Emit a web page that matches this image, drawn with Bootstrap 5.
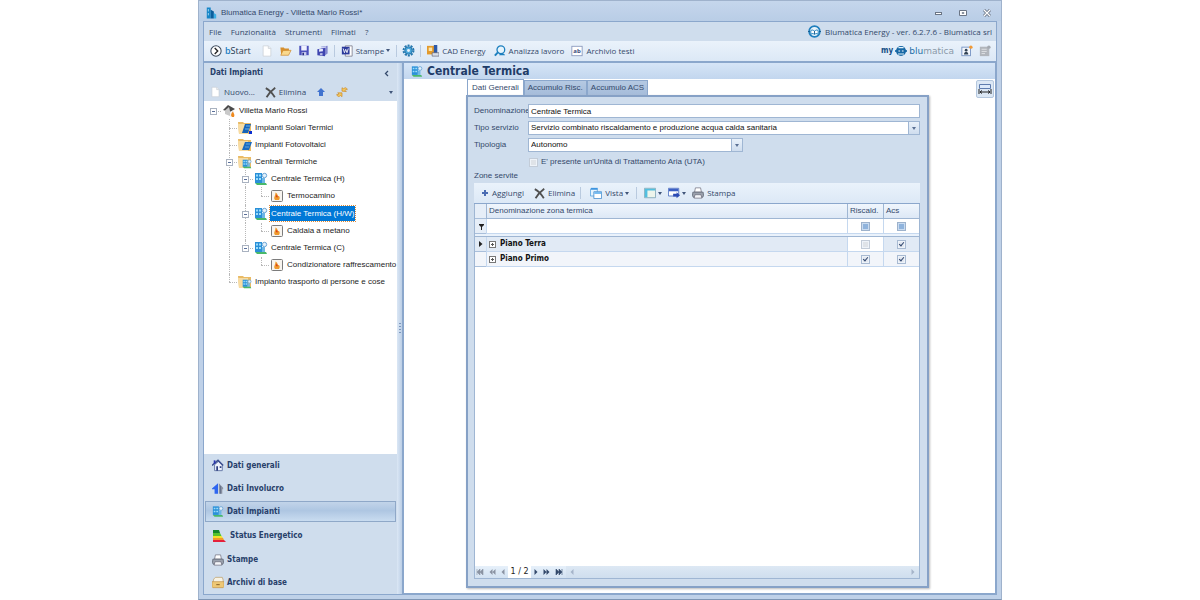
<!DOCTYPE html>
<html lang="it">
<head>
<meta charset="utf-8">
<meta name="viewport" content="width=device-width, initial-scale=1">
<title>Blumatica Energy - Villetta Mario Rossi*</title>
<link href="https://cdn.jsdelivr.net/npm/bootstrap@5.3.0/dist/css/bootstrap.min.css" rel="stylesheet">
<style>
:root{--ink:#34496b;--line:#8ba7cc;--face:#cfdded;--soft:#a9bfdb}
body{font:8px/14px "Open Sans","Noto Sans",sans-serif;color:var(--ink);background:#fff}
svg{display:block;flex:none}
button{border:0;background:none;color:inherit;padding:0;font:inherit}
.win{max-width:804px;border:1px solid #9fb2cc;border-bottom-color:#7f96b4;background:#bfd1e8;padding:0 4px 4px}
.titlebar{height:20px;background:linear-gradient(#c5d6ec,#b9cde6);margin:0 -4px;padding:3px 10px 0 7px}
.tah{font-family:"Liberation Sans",Arial,sans-serif}
.sego{font-family:"Open Sans","Noto Sans",sans-serif}
.bold{font-family:"DejaVu Sans Condensed","DejaVu Sans",sans-serif;font-weight:700}
.inner{border:1px solid var(--line);background:var(--face)}
.menubar{height:19px;padding:0 4px 0 5px}
.menubar a{color:var(--ink);text-decoration:none;margin-right:9px}
.toolstrip{height:21px;background:linear-gradient(#eaf2fb,#dce8f6);border-bottom:1px solid var(--line)}
.toolstrip.main{height:22px;padding:0 2px 1px 3px;border-bottom-width:2px}
.tool{display:flex;align-items:center;gap:3px;padding:0 3px;white-space:nowrap}
.tool.wide{padding:0 4px}
.rule{width:1px;height:12px;background:#b9cadf;margin:0 2px}
.caret{width:0;height:0;border:2px solid transparent;border-top:3px solid #41567a;border-bottom:0;margin-left:-1px}
.bstart{font-size:9px}
.bstart b{color:#1d7ec2;font-weight:600}.bstart span span{font-weight:500;color:#22364f}
.logo{font:9px "DejaVu Sans",sans-serif;color:#8b99a8;gap:2px}.logo b{font-weight:400;color:#1e70a8}.logo strong{font-size:8px;color:#164f86}
.side{width:193px;flex:none}
.side h2{font-size:8px;line-height:20px;margin:0;color:#27406a}
.sidetools{height:18px;padding-left:3px}
.heading{padding-left:6px}
.treebox{background:#fff;padding:1px 0 0 1px;overflow:hidden}
.tree{height:189px;margin:0;padding:0;list-style:none;color:#1c1c1c}
.tree li{display:flex;align-items:stretch;white-space:nowrap}
.tree li>svg{align-self:center;margin:0 1px}
.tree .txt{align-self:center;padding:0 1px;margin-left:1px}
.tree .txt.on{background:#0078d7;color:#fff;outline:1px dotted #e08a35;outline-offset:0;line-height:15px}
.cell{width:16px;flex:none;position:relative}
.cell.v::before,.cell.t::before,.cell.e::before{content:"";position:absolute;left:8px;top:0;bottom:0;border-left:1px dotted #b8b8b8}
.cell.e::before{bottom:50%}
.cell.t::after,.cell.e::after,.cell.h::after{content:"";position:absolute;left:8px;right:0;top:50%;border-top:1px dotted #b8b8b8}
.twist{position:absolute;z-index:1;left:5px;top:50%;margin-top:-3px;width:7px;height:7px;background:#fff;border:1px solid #a9b2c0}
.twist::after{content:"";position:absolute;left:1px;right:1px;top:2px;height:1px;background:#5a6f9a}
.sidenav button{display:flex;align-items:center;gap:3px;height:23px;padding:0 6px;margin:0 1px;border:1px solid transparent;color:#27406a}
.sidenav button.on{height:21px;margin:1px;border-color:#8fa8c8;background:linear-gradient(#c2d4e9,#aec6e2 45%,#c9dcf0)}
.sidenav button.tall{height:25px}
.split{width:5px;flex:none;background:linear-gradient(90deg,#dbe7f5,#bccfe6)}
.grip{width:2px;height:11px;background:repeating-linear-gradient(#7d97bd 0 1px,transparent 1px 3px)}
.main-pane{border:1px solid var(--line);border-width:0 1px 1px 2px;background:#fff;min-width:0}
.pagehead{height:16px;background:linear-gradient(#d6e5f7,#c2d6ee);padding-left:7px;color:#1f3c68}
.pagehead h1{font-size:12px;line-height:15px;margin:0}
.pages{padding:0 66px 5px 62px}
.tabs{height:16px;padding-left:1px}
.tabs button{height:15px;margin-top:1px;padding:0 3px;border:1px solid var(--line);border-bottom:0;background:linear-gradient(#b5c9e2,#a5bcda)}
.tabs button.on{background:#fff;height:16px;margin-top:0;padding:0 4px}
.sheet{border:2px solid #86a1c6;background:var(--face);padding:7px 7px 7px 6px;box-shadow:1px 1px 2px #bbb}
.formgrid{display:grid;grid-template-columns:54px 1fr;row-gap:3px;line-height:14px}
.field{height:14px;width:100%;border:1px solid #9fb6d3;border-radius:0;background:#fff;color:#111;padding:0 2px;font:8px/12px "Liberation Sans",Arial,sans-serif;appearance:none;display:block}
.pick{position:relative}
.pick::after{content:"";position:absolute;right:1px;top:1px;bottom:1px;width:11px;border-left:1px solid #9fb6d3;background:linear-gradient(#e9f1fa,#cfddee);pointer-events:none}
.pick::before{content:"";position:absolute;z-index:1;right:4px;top:6px;border:2px solid transparent;border-top:3px solid #5a7094;border-bottom:0;pointer-events:none}
.pick.half{width:215px}
.uta{display:flex;align-items:center;gap:3px;padding-left:1px}
.tick{appearance:none;width:9px;height:9px;margin:0;border:1px solid #a8bad2;background:#e3e8f0;position:relative;display:inline-block;vertical-align:top;flex:none;box-shadow:inset 0 0 0 1px #eef3f9}
.tick.dim{border-color:#c3ccd8;background:#dfe3e8}
.tick.mid{background:#8fb3dc;border-color:#9db2cc;box-shadow:inset 0 0 0 1px #c9dbf0}
.tick:checked::after{content:"";position:absolute;left:2px;top:0;width:3px;height:5px;border:solid #31486f;border-width:0 1px 1px 0;transform:rotate(40deg)}
.zones{border:1px solid #9fb6d3;border-top:0;background:#fff}
.zgrid{width:100%;table-layout:fixed;border-collapse:separate;border-spacing:0;line-height:12px}
.zgrid td,.zgrid th{height:15px;padding:0 2px;border:0 solid #c5d8ef;border-width:0 0 1px 1px;font-weight:400;white-space:nowrap;vertical-align:middle}
.zgrid th{background:linear-gradient(#f0f6fd,#dde8f6);border-color:#9fb6d3}
.zgrid tr>:first-child{border-left:0;padding:0 0 0 4px;background:#e6eef8;border-bottom-color:#a9bfdb}
.zgrid .gap td{height:3px;padding:0;background:#eaf2fb;border-width:0 0 1px;border-color:#9fb6d3}
.zgrid .c{text-align:center;line-height:9px;padding:1px 0 0}
.zgrid .sel td{background:#e1eaf5}.zgrid .alt td{background:#f2f5fa}
.zgrid .nm{color:#111;font-weight:700}
.plus{width:7px;height:7px;border:1px solid #777;background:linear-gradient(#555,#555) center/3px 1px no-repeat,linear-gradient(#555,#555) center/1px 3px no-repeat,#fff;margin-right:4px}
.pager{height:12px;background:linear-gradient(#dde8f4,#cfdeee)}
.pager .keys{background:linear-gradient(#e6f0fa,#d3e2f2);gap:5px;padding:0 3px 0 1px}
.pager .keys.fwd{padding:0 3px}
.pager .num{width:23px;background:#fff;color:#222;text-align:center;line-height:12px;font-family:"DejaVu Sans",sans-serif}
.fitbtn{right:1px;top:1px;padding:3px 1px;border:1px solid #b4c7de;border-radius:2px;background:#dce8f5}
</style>
</head>
<body>
<svg width="0" height="0" class="position-absolute" aria-hidden="true">
<symbol id="i-house" viewBox="0 0 14 14"><path d="M1 6 6 1l7 4-5 3z" fill="#4a4a4a"/><path d="M3 6.500l4-3.500 1 4v5L3 10z" fill="#c9c9c9"/><path d="m8 8 4-2v5l-4 2z" fill="#eee"/><path d="M10 13c-2-2 0-4 .8-5.500C12 9.500 13 11 12 13z" fill="#f08a1d"/></symbol>
<symbol id="i-folder" viewBox="0 0 14 14"><path d="M0 1h5l1 1h7v11H1z" fill="#e9bb66"/><path d="M0 3h10v10H1z" fill="#f8dca2"/></symbol>
<symbol id="i-solar" viewBox="0 0 14 14"><use href="#i-folder"/><path d="M7 3h6l-3 9H4z" fill="#1764b8"/><path d="M8 5h4M7 8h4" stroke="#6fb4ea"/><path d="M11 10h3v3h-3z" fill="#0b2fd0"/></symbol>
<symbol id="i-pv" viewBox="0 0 14 14"><use href="#i-folder"/><path d="M7 4h7l-3 8H4z" fill="#1c6cc0"/><path d="M8 6h4M7 9h4" stroke="#7ec0ee" stroke-width=".7"/></symbol>
<symbol id="i-plant" viewBox="0 0 14 14"><path d="M1 1h7v10H1z" fill="#2a90d8"/><path d="M2 2.500h2v2H2zM5 2.500h2v2H5zM2 6h2v2H2zM5 6h2v2H5z" fill="#9bdcfb"/><circle cx="10.500" cy="3.500" r="2.200" fill="#e4f1fb" stroke="#6aa5d6"/><path d="M8 6h3v5H8z" fill="#6db6e6"/><path d="M1 11h11l1 2H3z" fill="#49b86a"/></symbol>
<symbol id="i-fplant" viewBox="0 0 14 14"><use href="#i-folder"/><use href="#i-plant" x="4" y="4" width="10" height="10"/></symbol>
<symbol id="i-flame" viewBox="0 0 14 14"><rect x="1.500" y="1.500" width="11" height="11" rx="1" fill="#f7f4ef" stroke="#7c7c7c"/><path d="M5 11C3 8.500 5.500 7 5.500 3.500c2 1 2 2.500 2.500 3.500 1.500-.3 2.500 2 1 4z" fill="#ef9a2d"/><path d="M5.800 8c0-1 .7-1.500.7-2.500C7.500 6.500 8 7.500 7.500 8.500z" fill="#d9401d"/></symbol>
<symbol id="i-page" viewBox="0 0 14 14"><path d="M2.500 1h6l3 3v9h-9z" fill="#fff" stroke="#c6cbd3" stroke-width=".8"/><path d="M8.500 1v3h3" fill="#eee" stroke="#c6cbd3" stroke-width=".8"/></symbol>
<symbol id="i-x" viewBox="0 0 14 14"><path d="M1 1.500c4 2 8 6 11.500 11.500M13 1C9 4 5 8 2 13" fill="none" stroke="#505050" stroke-width="2.300"/></symbol>
<symbol id="i-open" viewBox="0 0 14 14"><path d="M1 3h4l1 1h5v7H2z" fill="#d6902f"/><path d="m4 6.500 9.500-.3L10.500 12H1.500z" fill="#f9d98e" stroke="#cf8a2e" stroke-width=".8"/></symbol>
<symbol id="i-save" viewBox="0 0 14 14"><path d="M1 1h12v12H1z" fill="#4b50bb"/><path d="M3.500 1h7v6h-7z" fill="#eef1ff"/><path d="M4 9h6v4H4z" fill="#c9cdec"/><path d="M5 10h2v3H5z" fill="#222a80"/></symbol>
<symbol id="i-saveall" viewBox="0 0 14 14"><path d="m5 2 8-1v9l-3 2z" fill="#8388cf"/><path d="m1 5 9-1.500V13l-9-1z" fill="#3f45b0"/><path d="m3 5 4.500-.7v3L3 8z" fill="#e8ebff"/><path d="m5 2.500 6-.7v1L5 3.500z" fill="#e8ebff"/><path d="m4 9.500 3-.3v3l-3-.4z" fill="#b8bde6"/></symbol>
<symbol id="i-printer" viewBox="0 0 14 14"><path d="M4 1h6l1 5H3z" fill="#fff" stroke="#667" stroke-width=".8"/><path d="M1 6h12l.5 4-1 2h-11L.5 10z" fill="#9ba2ae" stroke="#4e5563" stroke-width=".8"/><path d="M3.500 9h7l1 4h-9z" fill="#f3f5f9" stroke="#667" stroke-width=".8"/></symbol>
<symbol id="i-gear" viewBox="0 0 14 14"><circle cx="7" cy="7" r="5.300" fill="none" stroke="#2577ad" stroke-width="2.200" stroke-dasharray="2.200 1.130"/><circle cx="7" cy="7" r="4" fill="#4aa6d9" stroke="#2577ad"/><circle cx="7" cy="7" r="1.600" fill="#e8f3fb"/></symbol>
<symbol id="i-blu" viewBox="0 0 14 14"><circle cx="7" cy="7" r="5.800" fill="#e9f4fb" stroke="#1f7fbd" stroke-width="1.800"/><path d="M3 6c2-1.500 3 0 4 .6C8 6 9 4.500 11 6v4C9 8.500 8 9.500 7 10 6 9.500 5 8.500 3 10z" fill="#fff" stroke="#1f7fbd"/><path d="M7 6.500V10M0 7h2m10 0h2" stroke="#145a8c"/></symbol>
</svg>

<main class="win mx-auto min-vh-100 d-flex flex-column">
  <header class="titlebar d-flex align-items-center tah">
    <svg width="11" height="12" viewBox="0 0 14 14" class="me-1"><path d="M1 0h5v14H1z" fill="#1686c8"/><path d="m6 3 4 2v9H6z" fill="#0c5f9d"/><path d="m10 7 3 2v5h-3z" fill="#3db0e6"/><path d="M3 2v3m0 2v3" stroke="#bfe6fa"/></svg>
    <span class="me-auto">Blumatica Energy - Villetta Mario Rossi*</span>
    <button aria-label="Riduci"><svg width="9" height="8"><rect x="1.500" y="3.500" width="6" height="2" fill="#fff" stroke="#6b7585"/></svg></button>
    <button aria-label="Ingrandisci" class="ms-3 me-3"><svg width="8" height="8"><path d="M.5 1.500h7v5h-7z" fill="#fff" stroke="#6b7585"/><path d="M3 3.500h2v1H3z" fill="#6b7585" stroke="#6b7585" stroke-width=".5"/></svg></button>
    <button aria-label="Chiudi"><svg width="8" height="8"><path d="m1 1 6 6m0-6L1 7" stroke="#6b7585" stroke-width="3"/><path d="m1 1 6 6m0-6L1 7" stroke="#fff" stroke-width="1.200"/></svg></button>
  </header>

  <div class="inner flex-grow-1 d-flex flex-column">
    <nav class="menubar d-flex align-items-center">
      <a href="#">File</a><a href="#">Funzionalità</a><a href="#">Strumenti</a><a href="#">Filmati</a><a href="#">?</a>
      <svg width="13" height="13" class="ms-auto me-1"><use href="#i-blu"/></svg><span>Blumatica Energy - ver. 6.2.7.6 - Blumatica srl</span>
    </nav>

    <div class="toolstrip main d-flex align-items-center" role="toolbar">
      <button class="tool bstart me-1"><svg width="12" height="12" viewBox="0 0 14 14"><circle cx="7" cy="7" r="6" fill="#fff" stroke="#3c4a5c" stroke-width="1.200"/><path d="m5.500 3.500 3.500 3.500-3.500 3.500" fill="none" stroke="#222" stroke-width="1.600"/></svg><span><b>b</b><span>Start</span></span></button>
      <button class="tool" aria-label="Nuovo"><svg width="12" height="12"><use href="#i-page"/></svg></button>
      <button class="tool" aria-label="Apri"><svg width="13" height="12"><use href="#i-open"/></svg></button>
      <button class="tool" aria-label="Salva"><svg width="12" height="11"><use href="#i-save"/></svg></button>
      <button class="tool" aria-label="Salva tutto"><svg width="13" height="12"><use href="#i-saveall"/></svg></button>
      <span class="rule"></span>
      <button class="tool wide"><svg width="12" height="12" viewBox="0 0 14 14"><path d="M5 1h8v12H5z" fill="#fff" stroke="#667" stroke-width=".8"/><path d="M1 2h9v9H1z" fill="#2b3a9c"/><path d="m2.500 4 1.500 5 1.500-4L7 9l1.500-5" fill="none" stroke="#fff"/></svg>Stampe<span class="caret"></span></button>
      <span class="rule"></span>
      <button class="tool" aria-label="Impostazioni"><svg width="13" height="13"><use href="#i-gear"/></svg></button>
      <span class="rule"></span>
      <button class="tool wide"><svg width="12" height="12" viewBox="0 0 14 14"><path d="M0 1h9v10H0z" fill="#e39a2c"/><path d="M2 3h4v4H2z" fill="#fbe5ab"/><path d="M8 0h4v10H8z" fill="#2d5aa8"/><path d="M6 9h8v4H6z" fill="#d8dee8" stroke="#556" stroke-width=".7"/></svg>CAD Energy</button>
      <button class="tool wide"><svg width="12" height="12" viewBox="0 0 14 14"><circle cx="8" cy="5.500" r="4.500" fill="#e6f4fc" stroke="#1c7fbe" stroke-width="1.500"/><path d="M4.500 8.500 1 12.500" stroke="#1c7fbe" stroke-width="2.200"/><path d="M6 12c1-3 5-3 7 0z" fill="#1c7fbe"/></svg>Analizza lavoro</button>
      <button class="tool"><svg width="12" height="12" viewBox="0 0 14 14"><rect x="1" y="1.500" width="12" height="11" fill="#fff" stroke="#8796bb"/><text x="7" y="9.500" font-size="7" text-anchor="middle" font-weight="700" fill="#3b4a7c">ab</text></svg>Archivio testi</button>
      <span class="ms-auto d-flex align-items-center logo"><strong class="bold">my</strong><svg width="12" height="12" viewBox="0 0 14 14"><circle cx="7" cy="7" r="5.800" fill="#1768a5"/><path d="M0 7h14" stroke="#1768a5" stroke-width="2"/><path d="M4 3h6M3.500 10.500h7" stroke="#e6f4fc" stroke-width="1.400"/><path d="M4 7h2m2 0h2" stroke="#fff" stroke-width="1.400"/></svg><span><b>blu</b>matica</span></span>
      <button class="tool ms-1" aria-label="Account"><svg width="12" height="12" viewBox="0 0 14 14"><rect x="1" y="2.500" width="10" height="10" fill="#f3f7fd" stroke="#6f8fc0"/><circle cx="6" cy="6" r="1.600" fill="#345"/><path d="M3.500 11c0-4 5-4 5 0z" fill="#345"/><circle cx="11.500" cy="2.500" r="2" fill="#f29a35"/></svg></button>
      <button class="tool" aria-label="Note"><svg width="12" height="12" viewBox="0 0 14 14"><path d="M1 2h11v11H1z" fill="#b2b6bc"/><path d="M3 5h6M3 7.500h6M3 10h4" stroke="#e4e6e9"/><circle cx="11.500" cy="2.500" r="2" fill="#a4a9b0"/></svg></button>
    </div>

    <div class="flex-grow-1 d-flex">
      <aside class="side d-flex flex-column">
        <div class="heading d-flex align-items-center"><h2 class="bold me-auto">Dati Impianti</h2><button aria-label="Comprimi" class="me-2"><svg width="5" height="7"><path d="M4 1 1.500 3.500 4 6" fill="none" stroke="#34496b" stroke-width="1.300"/></svg></button></div>
        <div class="sidetools d-flex align-items-center" role="toolbar">
          <button class="tool"><svg width="11" height="12"><use href="#i-page"/></svg>Nuovo...</button>
          <button class="tool ms-1"><svg width="11" height="11"><use href="#i-x"/></svg>Elimina</button>
          <button class="tool wide ms-1" aria-label="Su"><svg width="8" height="8" viewBox="0 0 8 8"><path d="m4 0 4 4H6v4H2V4H0z" fill="#4173cf"/></svg></button>
          <button class="tool ms-1" aria-label="Aggiorna"><svg width="12" height="12" viewBox="0 0 14 14"><path d="M7 6V2l2 1.300C10.500 1 13 2 13 4.500 12 4 11 4 10.500 5L12 6.500zM7 8v4.500L5.200 11C3.500 13.500 1 12 1 9.500c1 .7 2 .7 2.500-.2L2 8z" fill="#f5c95c" stroke="#c9892a" stroke-width=".8"/></svg></button>
          <button class="ms-auto me-1" aria-label="Altro"><span class="caret d-block"></span></button>
        </div>
        <div class="treebox flex-grow-1 tah">
          <ul class="tree d-flex flex-column" role="tree">
            <li class="flex-fill"><span class="cell h"><i class="twist"></i></span><svg width="14" height="14"><use href="#i-house"/></svg><span class="txt">Villetta Mario Rossi</span></li>
            <li class="flex-fill"><span class="cell"></span><span class="cell t"></span><svg width="14" height="14"><use href="#i-solar"/></svg><span class="txt">Impianti Solari Termici</span></li>
            <li class="flex-fill"><span class="cell"></span><span class="cell t"></span><svg width="14" height="14"><use href="#i-pv"/></svg><span class="txt">Impianti Fotovoltaici</span></li>
            <li class="flex-fill"><span class="cell"></span><span class="cell t"><i class="twist"></i></span><svg width="14" height="14"><use href="#i-fplant"/></svg><span class="txt">Centrali Termiche</span></li>
            <li class="flex-fill"><span class="cell"></span><span class="cell v"></span><span class="cell t"><i class="twist"></i></span><svg width="14" height="14"><use href="#i-plant"/></svg><span class="txt">Centrale Termica (H)</span></li>
            <li class="flex-fill"><span class="cell"></span><span class="cell v"></span><span class="cell v"></span><span class="cell e"></span><svg width="14" height="14"><use href="#i-flame"/></svg><span class="txt">Termocamino</span></li>
            <li class="flex-fill"><span class="cell"></span><span class="cell v"></span><span class="cell t"><i class="twist"></i></span><svg width="14" height="14"><use href="#i-plant"/></svg><span class="txt on">Centrale Termica (H/W)</span></li>
            <li class="flex-fill"><span class="cell"></span><span class="cell v"></span><span class="cell v"></span><span class="cell e"></span><svg width="14" height="14"><use href="#i-flame"/></svg><span class="txt">Caldaia a metano</span></li>
            <li class="flex-fill"><span class="cell"></span><span class="cell v"></span><span class="cell e"><i class="twist"></i></span><svg width="14" height="14"><use href="#i-plant"/></svg><span class="txt">Centrale Termica (C)</span></li>
            <li class="flex-fill"><span class="cell"></span><span class="cell v"></span><span class="cell"></span><span class="cell e"></span><svg width="14" height="14"><use href="#i-flame"/></svg><span class="txt">Condizionatore raffrescamento</span></li>
            <li class="flex-fill"><span class="cell"></span><span class="cell e"></span><svg width="14" height="14"><use href="#i-fplant"/></svg><span class="txt">Impianto trasporto di persone e cose</span></li>
          </ul>
        </div>
        <nav class="sidenav d-flex flex-column bold">
          <button><svg width="12" height="13" viewBox="0 0 14 14"><path d="M3 6v7h9V6L8 2z" fill="#eef2fb" stroke="#5a6ea0"/><path d="M0 7 7 1l6 6" fill="none" stroke="#3c4f8f" stroke-width="1.800"/><path d="M2 1h2v4H2z" fill="#2b36b0"/><path d="M5 8h2v5H5zM9 8h2v2H9z" fill="#2b3d80"/></svg>Dati generali</button>
          <button><svg width="12" height="13" viewBox="0 0 14 14"><path d="M0 7 7 1v12H3V8H0z" fill="#2f66f0"/><path d="m8 1 5 5v2h-1v5H8z" fill="#8b93a3"/><path d="M10 4v9" stroke="#5e6b84"/></svg>Dati Involucro</button>
          <button class="on"><svg width="12" height="13"><use href="#i-plant"/></svg>Dati Impianti</button>
          <button class="tall"><svg width="15" height="14" viewBox="0 0 15 14"><path d="M1 1h6l1 3H1z" fill="#14862b"/><path d="M1 4h7l1.500 3H1z" fill="#57c32c"/><path d="M1 7h8.500l1.500 2H1z" fill="#f3e22a"/><path d="M1 9h10l1 2H1z" fill="#f2992a"/><path d="M1 11h11l2 2H1z" fill="#e5203a"/></svg>Status Energetico</button>
          <button><svg width="12" height="12"><use href="#i-printer"/></svg>Stampe</button>
          <button><svg width="12" height="13" viewBox="0 0 14 14"><path d="M2 3 4 1h8l1 3v4H1z" fill="#f7f2e4" stroke="#b99b62" stroke-width=".8"/><path d="M0 6h14v6l-1 1H1l-1-1z" fill="#eec876" stroke="#c1924a" stroke-width=".8"/><path d="M5 9.500h4" stroke="#8c6429" stroke-width="1.200"/></svg>Archivi di base</button>
        </nav>
      </aside>
      <div class="split d-flex align-items-center justify-content-center"><div class="grip"></div></div>

      <section class="main-pane flex-grow-1 d-flex flex-column">
        <div class="pagehead d-flex align-items-center"><svg width="12" height="13" class="me-1"><use href="#i-plant"/></svg><h1 class="bold">Centrale Termica</h1></div>
        <div class="position-relative flex-grow-1 d-flex flex-column">
          <button class="fitbtn position-absolute" aria-label="Adatta larghezza"><svg width="14" height="10"><path d="M1.500.5h11v4h-11z" fill="#dbe9fa" stroke="#5e7cae"/><path d="M1 5v5m12-5v5M2 8h10M4 6.500 2 8l2 1.500m6-3L12 8l-2 1.500" stroke="#222" fill="none"/></svg></button>
          <div class="pages flex-grow-1 d-flex flex-column">
            <div class="tabs d-flex tah" role="tablist"><button class="on" role="tab">Dati Generali</button><button role="tab">Accumulo Risc.</button><button role="tab">Accumulo ACS</button></div>
            <div class="sheet flex-grow-1 d-flex flex-column tah">
              <div class="formgrid">
                <label for="den">Denominazione</label><input id="den" class="field" value="Centrale Termica">
                <label for="srv">Tipo servizio</label><div class="pick"><select id="srv" class="field"><option>Servizio combinato riscaldamento e produzione acqua calda sanitaria</option></select></div>
                <label for="tip">Tipologia</label><div class="pick half"><select id="tip" class="field"><option>Autonomo</option></select></div>
                <span></span><label class="uta"><input type="checkbox" class="tick dim">E' presente un'Unità di Trattamento Aria (UTA)</label>
              </div>
              <div>Zone servite</div>
              <div class="toolstrip d-flex align-items-center ps-1 sego" role="toolbar">
                <button class="tool"><svg width="8" height="8"><path d="M4 1v6M1 4h6" stroke="#4a6cb3" stroke-width="2"/></svg>Aggiungi</button>
                <button class="tool ms-1"><svg width="11" height="11"><use href="#i-x"/></svg>Elimina</button>
                <span class="rule"></span>
                <button class="tool ms-1"><svg width="12" height="12" viewBox="0 0 14 14"><path d="M.5 2.500h8v8h-8z" fill="#e6f4ff" stroke="#5aa5e0"/><path d="M1 1h8v2H1z" fill="#3e95e0"/><path d="M4.500 5.500h9v8h-9z" fill="#fff" stroke="#4a90d0"/><path d="M5 6h8v2H5z" fill="#63b2ef"/></svg>Vista<span class="caret"></span></button>
                <span class="rule mx-1"></span>
                <button class="tool" aria-label="Colonne"><svg width="12" height="12" viewBox="0 0 14 14"><path d="M.5 1.500h13v11H.5z" fill="#edf5ec" stroke="#7fa6b8"/><path d="M1 2h12v2H1zM1 2h3v10H1z" fill="#52bfe0"/></svg><span class="caret"></span></button>
                <button class="tool" aria-label="Esporta"><svg width="12" height="12" viewBox="0 0 14 14"><path d="M.5 1.500h12v9H.5z" fill="#fff" stroke="#4c6ec0"/><path d="M1 2h11v3H1z" fill="#3c60c4"/><path d="M6 8h4V6l4 3.500-4 3.500v-2H6z" fill="#2c4bb4"/></svg><span class="caret"></span></button>
                <button class="tool"><svg width="12" height="12"><use href="#i-printer"/></svg>Stampa</button>
              </div>
              <div class="zones flex-grow-1 d-flex flex-column">
                <table class="zgrid">
                  <colgroup><col style="width:11px"><col><col style="width:36px"><col style="width:36px"></colgroup>
                  <thead>
                    <tr><th></th><th scope="col">Denominazione zona termica</th><th scope="col">Riscald.</th><th scope="col">Acs</th></tr>
                    <tr><td><svg width="5" height="7"><path d="M0 1h5v1L3 4v3H2V4L0 2z" fill="#222"/></svg></td><td></td><td class="c"><input type="checkbox" class="tick mid" aria-label="Filtro Riscald."></td><td class="c"><input type="checkbox" class="tick mid" aria-label="Filtro Acs"></td></tr>
                    <tr class="gap"><td colspan="4"></td></tr>
                  </thead>
                  <tbody>
                    <tr class="sel"><td><svg width="4" height="6"><path d="M0 0v6l3.500-3z" fill="#222"/></svg></td><td class="bold nm"><div class="d-flex align-items-center"><i class="plus"></i>Piano Terra</div></td><td class="c bg-white"><input type="checkbox" class="tick dim" aria-label="Piano Terra Riscald."></td><td class="c"><input type="checkbox" class="tick" checked aria-label="Piano Terra Acs"></td></tr>
                    <tr class="alt"><td></td><td class="bold nm"><div class="d-flex align-items-center"><i class="plus"></i>Piano Primo</div></td><td class="c"><input type="checkbox" class="tick" checked aria-label="Piano Primo Riscald."></td><td class="c"><input type="checkbox" class="tick" checked aria-label="Piano Primo Acs"></td></tr>
                  </tbody>
                </table>
                <div class="pager d-flex mt-auto">
                  <div class="keys d-flex align-items-center">
                    <button aria-label="Primo"><svg width="8" height="6"><path d="M1 0v6M4 0v6L1 3zM7 0v6L4 3z" fill="#8b93a3" stroke="#8b93a3" stroke-width=".6"/></svg></button>
                    <button aria-label="Pagina precedente"><svg width="7" height="6"><path d="M3.500 0v6L.5 3zM6.500 0v6l-3-3z" fill="#8b93a3"/></svg></button>
                    <button aria-label="Precedente"><svg width="4" height="6"><path d="M3.500 0v6l-3-3z" fill="#8b93a3"/></svg></button>
                  </div>
                  <div class="num">1 / 2</div>
                  <div class="keys fwd d-flex align-items-center">
                    <button aria-label="Successivo"><svg width="4" height="6"><path d="M.5 0v6l3-3z" fill="#34496b"/></svg></button>
                    <button aria-label="Pagina successiva"><svg width="7" height="6"><path d="M.5 0v6l3-3zM3.500 0v6l3-3z" fill="#34496b"/></svg></button>
                    <button aria-label="Ultimo"><svg width="8" height="6"><path d="M7 0v6M1 0v6l3-3zM4 0v6l3-3z" fill="#34496b" stroke="#34496b" stroke-width=".6"/></svg></button>
                  </div>
                  <div class="d-flex flex-grow-1 justify-content-between align-items-center px-1">
                    <svg width="4" height="6"><path d="M3.500 0v6l-3-3z" fill="#a5b4c9"/></svg><svg width="4" height="6"><path d="M.5 0v6l3-3z" fill="#a5b4c9"/></svg>
                  </div>
                </div>
              </div>
            </div>
          </div>
        </div>
      </section>
    </div>
  </div>
</main>
<script src="https://cdn.jsdelivr.net/npm/bootstrap@5.3.0/dist/js/bootstrap.bundle.min.js"></script>
</body>
</html>
